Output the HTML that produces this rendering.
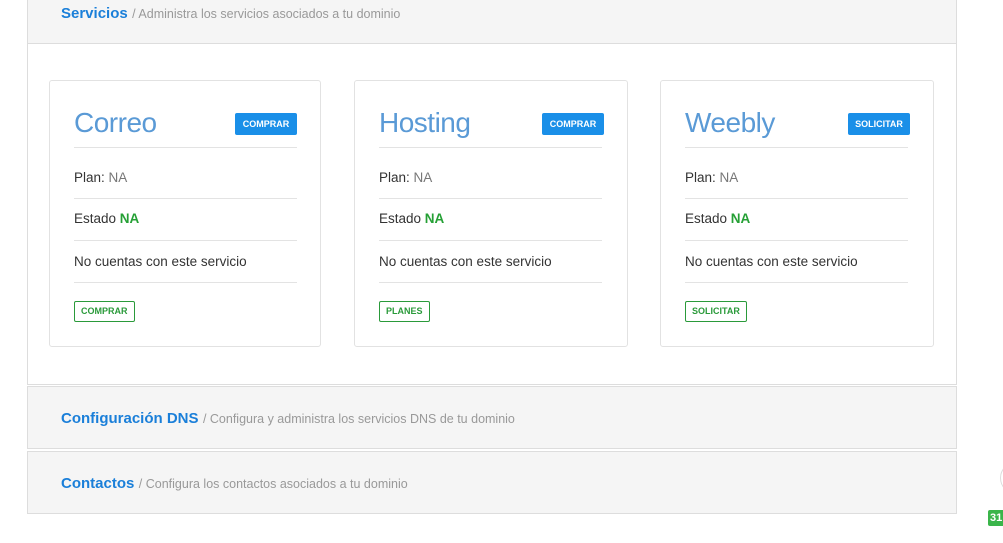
<!DOCTYPE html><html><head><style>
body{margin:0;width:1003px;height:543px;background:#fff;font-family:"Liberation Sans",sans-serif;position:relative;overflow:hidden}
.a{position:absolute}
.hd{background:#f5f5f5;border:1px solid #ddd;box-sizing:border-box}
.t{color:#1a7fd9;font-weight:bold;font-size:15px}
.s{color:#999;font-size:12.5px}
.card{position:absolute;top:80px;width:272px;height:267px;border:1px solid #e2e2e2;border-radius:3px;box-sizing:border-box}
.card .ti{position:absolute;left:24px;top:26px;font-size:28px;font-weight:300;color:#5a9ad6;letter-spacing:-0.5px}
.card .bb{position:absolute;left:185px;top:32px;width:62px;height:22px;background:#1a8fe8;color:#fff;font-size:9px;font-weight:bold;text-align:center;line-height:22px;border-radius:2px}
.card .ln{position:absolute;left:24px;width:223px;height:1px;background:#e3e3e3}
.card .tx{position:absolute;left:24px;font-size:13.5px;color:#333}
.card .ob{position:absolute;left:24px;top:220px;height:19px;padding:0 6px;border:1px solid #2a9a3a;color:#2a9a3a;font-size:9px;font-weight:bold;line-height:19px;border-radius:2px}
.g{color:#25a035;font-weight:bold}.n{color:#777}
</style></head><body>
<div class="a" style="left:27px;top:-2px;width:930px;height:387px;border:1px solid #ddd;box-sizing:border-box"></div>
<div class="a hd" style="left:27px;top:-2px;width:930px;height:46px"></div>
<div class="a" style="left:61px;top:5px"><span class="t">Servicios</span> <span class="s">/ Administra los servicios asociados a tu dominio</span></div>

<div class="card" style="left:49px"><div class="ti">Correo</div><div class="bb">COMPRAR</div>
<div class="ln" style="top:66px"></div><div class="tx" style="top:89px">Plan: <span class="n">NA</span></div>
<div class="ln" style="top:117px"></div><div class="tx" style="top:130px">Estado <span class="g">NA</span></div>
<div class="ln" style="top:159px"></div><div class="tx" style="top:173px">No cuentas con este servicio</div>
<div class="ln" style="top:201px"></div><div class="ob">COMPRAR</div></div>

<div class="card" style="left:354px;width:274px"><div class="ti">Hosting</div><div class="bb" style="left:187px">COMPRAR</div>
<div class="ln" style="top:66px"></div><div class="tx" style="top:89px">Plan: <span class="n">NA</span></div>
<div class="ln" style="top:117px"></div><div class="tx" style="top:130px">Estado <span class="g">NA</span></div>
<div class="ln" style="top:159px"></div><div class="tx" style="top:173px">No cuentas con este servicio</div>
<div class="ln" style="top:201px"></div><div class="ob">PLANES</div></div>

<div class="card" style="left:660px;width:274px"><div class="ti">Weebly</div><div class="bb" style="left:187px">SOLICITAR</div>
<div class="ln" style="top:66px"></div><div class="tx" style="top:89px">Plan: <span class="n">NA</span></div>
<div class="ln" style="top:117px"></div><div class="tx" style="top:130px">Estado <span class="g">NA</span></div>
<div class="ln" style="top:159px"></div><div class="tx" style="top:173px">No cuentas con este servicio</div>
<div class="ln" style="top:201px"></div><div class="ob">SOLICITAR</div></div>

<div class="a hd" style="left:27px;top:386px;width:930px;height:63px"></div>
<div class="a" style="left:61px;top:410px"><span class="t">Configuración DNS</span> <span class="s">/ Configura y administra los servicios DNS de tu dominio</span></div>
<div class="a hd" style="left:27px;top:451px;width:930px;height:63px"></div>
<div class="a" style="left:61px;top:475px"><span class="t">Contactos</span> <span class="s">/ Configura los contactos asociados a tu dominio</span></div>
<div class="a" style="left:1000px;top:462px;width:30px;height:30px;border:1px solid #ddd;border-radius:50%"></div>
<div class="a" style="left:988px;top:510px;width:20px;height:16px;background:#3ab54a;color:#fff;font-size:11px;font-weight:bold;line-height:16px;padding-left:2px;border-radius:2px">31</div>
</body></html>
